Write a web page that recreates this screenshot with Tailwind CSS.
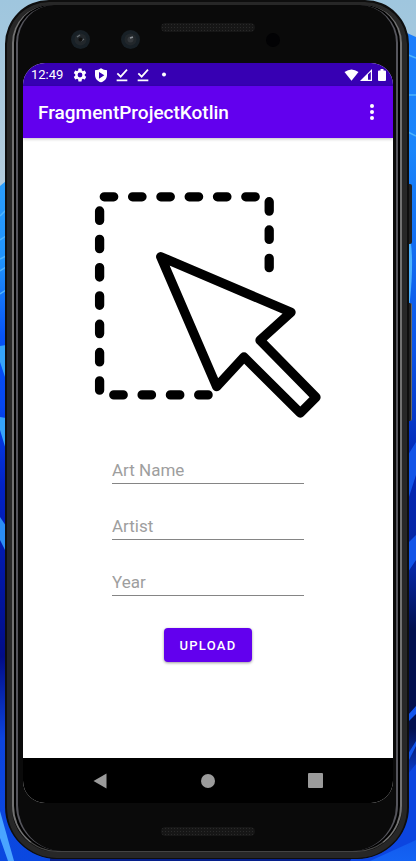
<!DOCTYPE html>
<html lang="en">
<head>
<meta charset="utf-8">
<meta name="viewport" content="width=device-width, initial-scale=1">
<title>FragmentProjectKotlin</title>
<script src="https://cdn.jsdelivr.net/npm/@tailwindcss/browser@4"></script>
</head>
<body class="relative isolate flex min-h-screen flex-col bg-[#0838c8] pr-[7px] pb-[2px] pl-[5px] font-[Roboto,sans-serif]">

<!-- Desktop wallpaper -->
<svg class="absolute inset-0 -z-10 h-full w-full" viewBox="0 0 416 861" preserveAspectRatio="none" aria-hidden="true">
  <defs>
    <linearGradient id="sky" x1="0" y1="0" x2="0" y2="1"><stop offset="0" stop-color="#9fc6de"/><stop offset="1" stop-color="#b9cfde"/></linearGradient>
    <linearGradient id="left" x1="0" y1="180" x2="0" y2="861" gradientUnits="userSpaceOnUse"><stop offset="0" stop-color="#2b9dfb"/><stop offset=".12" stop-color="#2193fb"/><stop offset=".23" stop-color="#0753f6"/><stop offset=".33" stop-color="#0647f0"/><stop offset=".45" stop-color="#0222c4"/><stop offset=".7" stop-color="#020d86"/><stop offset=".82" stop-color="#0d44dd"/><stop offset="1" stop-color="#0a48e0"/></linearGradient>
    <linearGradient id="right" x1="0" y1="33" x2="0" y2="861" gradientUnits="userSpaceOnUse"><stop offset="0" stop-color="#1c7dfb"/><stop offset=".14" stop-color="#1a86fb"/><stop offset=".38" stop-color="#0b55e8"/><stop offset=".52" stop-color="#0226b4"/><stop offset=".65" stop-color="#0626a0"/><stop offset=".72" stop-color="#02104e"/><stop offset=".84" stop-color="#020f4e"/><stop offset=".9" stop-color="#0b3fd8"/><stop offset="1" stop-color="#1463f4"/></linearGradient>
  </defs>
  <rect width="416" height="230" fill="url(#sky)"/>
  <path d="M0 186L6 181L200 240V861H0Z" fill="url(#left)"/>
  <path d="M200 30H400L416 37V861H200Z" fill="url(#right)"/>
  <g fill="none" stroke="#4fb4fc" stroke-width="1.5">
    <path d="M0 216L6 210M0 240L6 236M0 259L6 256M0 271L6 267M0 294L6 290"/>
    <path d="M406 54L416 58M406 95H416M406 131L416 136"/>
  </g>
  <path d="M0 346L6 345V380L0 362ZM0 417L6 418V450L0 430Z" fill="#36a4fa"/>
  <path d="M0 517L6 526V552L0 540Z" fill="#2b8df5"/>
  <path d="M408 231Q415 250 410 300L408 315Z" fill="#4cb2fd"/>
  <path d="M408 455L416 442V475L408 500ZM408 543L416 535V560L408 572Z" fill="#1254e8"/>
  <path d="M408 715L416 706V714L408 722ZM408 754L416 741V746L408 762Z" fill="#1255ec"/>
  <path d="M0 811L14 861H8L0 838Z" fill="#4aa5ff"/>
  <path d="M50 857H366V861H50Z" fill="#06208c"/>
  <path d="M395 790L416 764V840L370 861H350Z" fill="#0c45e0"/>
</svg>

<!-- Side keys -->
<div class="absolute top-[184px] right-[4px] h-[60px] w-[4px] rounded-r-xs bg-[#222]"></div>
<div class="absolute top-[303px] right-[4px] h-[118px] w-[4px] rounded-r-xs border-r border-[#666] bg-[#222]"></div>

<!-- Phone shell, from the outer rim inwards -->
<div class="relative flex flex-1 flex-col rounded-t-[44px] rounded-b-[52px] border-x-2 border-t-2 border-b border-[#0e0e0e] bg-black">
 <div class="flex flex-1 flex-col rounded-t-[42px] rounded-b-[50px] border-x-[5px] border-t-[3px] border-b-[6px] border-[#272727] bg-black">
  <div class="flex flex-1 flex-col rounded-t-[38px] rounded-b-[46px] border-x-2 border-b border-x-[#727272] border-b-[#444] bg-black px-[2px]">
   <div class="flex flex-1 flex-col rounded-t-[38px] rounded-b-[46px] border-x-2 border-x-[#55555c] bg-[#0a0a0a] pr-[3px] pl-[5px]">

    <!-- Top bezel: cameras, speaker, sensor -->
    <div class="grid h-[58px] grid-cols-3 pt-[17px]" aria-hidden="true">
      <div class="flex items-start gap-[31px] pt-[8px] pl-[48px]">
        <svg class="size-[19px]" viewBox="0 0 19 19"><circle cx="9.500" cy="9.500" r="9.500" fill="#182026"/><circle cx="9.500" cy="9.500" r="6" fill="#22272b"/><path d="M6 7L9 5M10 11L13 9" stroke="#656c72" stroke-width="1.500"/><circle cx="9.500" cy="9.500" r="2" fill="#111"/></svg>
        <svg class="size-[19px]" viewBox="0 0 19 19"><circle cx="9.500" cy="9.500" r="9.500" fill="#182026"/><circle cx="9.500" cy="9.500" r="6" fill="#22272b"/><circle cx="9.500" cy="9.500" r="3" fill="#34383c"/><path d="M9 8L12 7" stroke="#8a8f94" stroke-width="1.500"/></svg>
      </div>
      <div class="mx-auto mt-px h-[9px] w-[94px] rounded-full bg-[#161616] bg-[radial-gradient(#2a2a2a_1px,transparent_1px)] bg-size-[3px_3px]"></div>
      <div class="mt-[11px] -ml-1 size-[14px] rounded-full bg-[#020204]"></div>
    </div>

    <!-- Screen -->
    <div class="flex flex-1 flex-col overflow-hidden rounded-[22px] bg-white">
      <div class="flex h-[23px] items-center bg-[#3700b3] pr-[7px] pl-[8px] text-white">
        <span class="text-[13px] leading-none">12:49</span>
        <div class="ml-[9px] flex items-center gap-[5px]">
          <svg class="size-[16px]" viewBox="0 0 24 24" fill="currentColor" aria-hidden="true"><path d="M19.140 12.940c.04-.3.06-.61.06-.94 0-.32-.02-.64-.07-.94l2.030-1.580c.18-.14.23-.41.12-.61l-1.920-3.320c-.12-.22-.37-.29-.59-.22l-2.390.96c-.5-.38-1.030-.7-1.620-.94l-.36-2.540c-.04-.24-.24-.41-.48-.41h-3.840c-.24 0-.43.17-.47.41l-.36 2.540c-.59.24-1.130.57-1.620.94l-2.390-.96c-.22-.08-.47 0-.59.22L2.740 8.870c-.12.21-.08.47.12.61l2.030 1.580c-.05.3-.09.63-.09.94s.02.64.07.94l-2.030 1.580c-.18.14-.23.41-.12.61l1.920 3.320c.12.22.37.29.59.22l2.390-.96c.5.38 1.030.7 1.620.94l.36 2.540c.05.24.24.41.48.41h3.840c.24 0 .44-.17.47-.41l.36-2.540c.59-.24 1.130-.56 1.620-.94l2.390.96c.22.08.47 0 .59-.22l1.920-3.320c.12-.22.07-.47-.12-.61l-2.010-1.580zM12 15.600a3.600 3.600 0 1 1 0-7.200 3.600 3.600 0 0 1 0 7.200z"/></svg>
          <svg class="size-[16px]" viewBox="0 0 24 24" fill="currentColor" fill-rule="evenodd" aria-hidden="true"><path d="M12 2Q8 5 3 5V12C3 17.500 7 21.500 12 23C17 21.500 21 17.500 21 12V5Q16 5 12 2ZM9 7.500L17 12.500L9 17.500Z"/></svg>
          <svg class="size-[16px]" viewBox="0 0 24 24" fill="none" stroke="currentColor" stroke-width="2.600" aria-hidden="true"><path d="M5 9.500L10 14.500L19.500 4M4 20H20"/></svg>
          <svg class="size-[16px]" viewBox="0 0 24 24" fill="none" stroke="currentColor" stroke-width="2.600" aria-hidden="true"><path d="M5 9.500L10 14.500L19.500 4M4 20H20"/></svg>
          <svg class="size-[16px]" viewBox="0 0 16 16" fill="currentColor" aria-hidden="true"><circle cx="8" cy="7.500" r="2"/></svg>
        </div>
        <div class="ml-auto flex items-center">
          <svg class="h-[12px] w-[15px]" viewBox="0 0 15 12" fill="currentColor" aria-hidden="true"><path d="M0.500 3Q7.500-2 14.500 3L7.500 11.800Z"/></svg>
          <svg class="ml-px h-[12px] w-[12px]" viewBox="0 0 12 12" aria-hidden="true"><path d="M0 12L12 0V12Z" fill="#fff"/><path d="M8 5.500L10.800 2.700V10.800H8Z" fill="#3700b3"/></svg>
          <svg class="ml-[6px] h-[12px] w-[8px]" viewBox="0 0 8 12" fill="currentColor" aria-hidden="true"><path d="M2.500 0H5.500V1.500H7A1 1 0 0 1 8 2.500V11A1 1 0 0 1 7 12H1A1 1 0 0 1 0 11V2.500A1 1 0 0 1 1 1.500H2.500Z"/></svg>
        </div>
      </div>

      <header class="flex h-[52px] items-center justify-between bg-[#6200ee] pr-[12px] pl-[15px] text-white shadow-[0_1px_3px_rgba(0,0,0,0.25)]">
        <h1 class="pt-[2px] text-[19px] font-medium">FragmentProjectKotlin</h1>
        <button type="button" aria-label="More options" class="flex h-[36px] w-[18px] items-center justify-center">
          <svg class="h-[16px] w-[4px]" viewBox="0 0 4 16" fill="currentColor"><circle cx="2" cy="2" r="2"/><circle cx="2" cy="8" r="2"/><circle cx="2" cy="14" r="2"/></svg>
        </button>
      </header>

      <main class="flex flex-1 flex-col items-center pt-[42px] pb-8">
        <svg class="size-[250px]" viewBox="83 180 250 250" fill="none" stroke="#000" stroke-width="9.300" stroke-linecap="round" stroke-linejoin="round" role="img" aria-label="Select image">
          <g stroke-dasharray="9.400 18.900">
            <path d="M104.300 196.800H256"/>
            <path d="M269.200 201.700V269"/>
            <path d="M99.600 211V391"/>
            <path d="M113.800 394.900H209"/>
          </g>
          <path fill="#fff" d="M160.700 256.700L291 312.300L260 340.300L316 397.300L300.300 413L244 357L216.700 386.700Z"/>
        </svg>
        <form class="mt-[18px] flex w-[192px] flex-col items-center gap-[20px]" onsubmit="return false">
          <input type="text" aria-label="Art Name" placeholder="Art Name" class="h-[36px] w-full border-b border-[#858585] pt-[8px] text-[17px] outline-none placeholder:text-[#9e9e9e]">
          <input type="text" aria-label="Artist" placeholder="Artist" class="h-[36px] w-full border-b border-[#858585] pt-[8px] text-[17px] outline-none placeholder:text-[#9e9e9e]">
          <input type="text" aria-label="Year" placeholder="Year" class="h-[36px] w-full border-b border-[#858585] pt-[8px] text-[17px] outline-none placeholder:text-[#9e9e9e]">
          <button type="submit" class="mt-[12px] h-[34px] w-[88px] rounded-[4px] bg-[#6200ee] pt-[2px] text-[13px] font-medium tracking-widest text-white shadow-[0_1px_3px_rgba(0,0,0,0.4)]">UPLOAD</button>
        </form>
      </main>

      <nav class="flex h-[45px] items-center justify-between bg-black px-[70px] text-[#9b9b9b]" aria-label="System navigation">
        <button type="button" aria-label="Back" class="flex size-[16px] items-center justify-center"><svg class="size-[16px]" viewBox="0 0 16 16" fill="currentColor"><path d="M0.500 8L13.500 0.500V15.500Z"/></svg></button>
        <button type="button" aria-label="Home" class="flex size-[16px] items-center justify-center"><svg class="size-[14px]" viewBox="0 0 14 14" fill="currentColor"><circle cx="7" cy="7" r="7"/></svg></button>
        <button type="button" aria-label="Overview" class="flex size-[16px] items-center justify-center"><svg class="size-[15px]" viewBox="0 0 15 15" fill="currentColor"><rect width="15" height="15" rx="1"/></svg></button>
      </nav>
    </div>

    <!-- Bottom bezel speaker -->
    <div class="h-[48px] pt-[24px]" aria-hidden="true">
      <div class="mx-auto h-[9px] w-[94px] rounded-full bg-[#161616] bg-[radial-gradient(#2a2a2a_1px,transparent_1px)] bg-size-[3px_3px]"></div>
    </div>
   </div>
  </div>
 </div>
</div>
</body>
</html>
